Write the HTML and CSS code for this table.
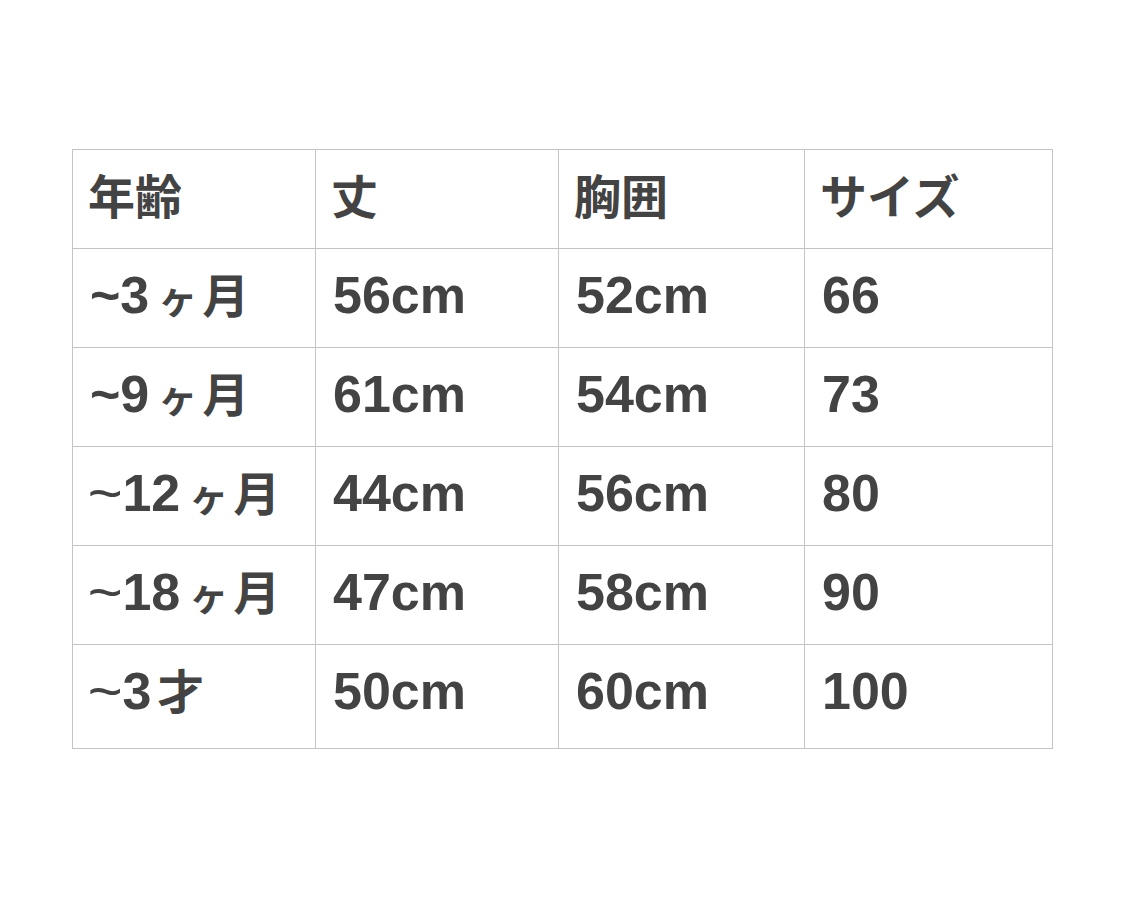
FILE: index.html
```html
<!DOCTYPE html>
<html lang="ja">
<head>
<meta charset="utf-8">
<link rel="stylesheet" href="styles.css">
</head>
<body>
<div class="page">
<table class="size-table">
  <colgroup>
    <col class="c1"><col class="c2"><col class="c3"><col class="c4">
  </colgroup>
  <tr><td><span class="jp">年齢</span></td><td><span class="jp">丈</span></td><td><span class="jp">胸囲</span></td><td><span class="jp">サイズ</span></td></tr>
  <tr><td>~3<span class="ke">ヶ</span><span class="jp">月</span></td><td>56cm</td><td>52cm</td><td>66</td></tr>
  <tr><td>~9<span class="ke">ヶ</span><span class="jp">月</span></td><td>61cm</td><td>54cm</td><td>73</td></tr>
  <tr><td><span class="light">~</span>12<span class="ke">ヶ</span><span class="jp">月</span></td><td>44cm</td><td>56cm</td><td>80</td></tr>
  <tr><td><span class="light">~</span>18<span class="ke">ヶ</span><span class="jp">月</span></td><td>47cm</td><td>58cm</td><td>90</td></tr>
  <tr class="last"><td><span class="light">~</span>3<span class="jp sai">才</span></td><td>50cm</td><td>60cm</td><td>100</td></tr>
</table>
</div>
</body>
</html>
```

FILE: styles.css
```css
html, body {
  margin: 0;
  padding: 0;
  background: #ffffff;
}
.page {
  padding: 149px 0 0 72px;
}
.size-table {
  border-collapse: collapse;
  width: 980px;
  table-layout: fixed;
  font-family: "Liberation Sans", "Noto Sans CJK JP", sans-serif;
  font-weight: bold;
  font-size: 52px;
  color: #434343;
}
.c1 { width: 243px; }
.c2 { width: 243px; }
.c3 { width: 246px; }
.c4 { width: 248px; }
.size-table td {
  border: 1px solid #c4c4c4;
  height: 99px;
  padding: 20px 0 0 17px;
  box-sizing: border-box;
  vertical-align: top;
  line-height: 52px;
  white-space: nowrap;
}
.size-table tr.last td {
  height: 104px;
}
.jp {
  font-family: "Noto Sans CJK JP", sans-serif;
  font-size: 47px;
  line-height: 1;
  margin-left: -2px;
}
.ke {
  font-family: "Noto Sans CJK JP", sans-serif;
  font-size: 39px;
  line-height: 1;
  margin: 0 7px 0 9px;
}
.sai {
  margin-left: 6px;
}
.light {
  font-weight: normal;
  display: inline-block;
  transform: scale(1.15, 1.1);
  margin-right: 2px;
}
```
